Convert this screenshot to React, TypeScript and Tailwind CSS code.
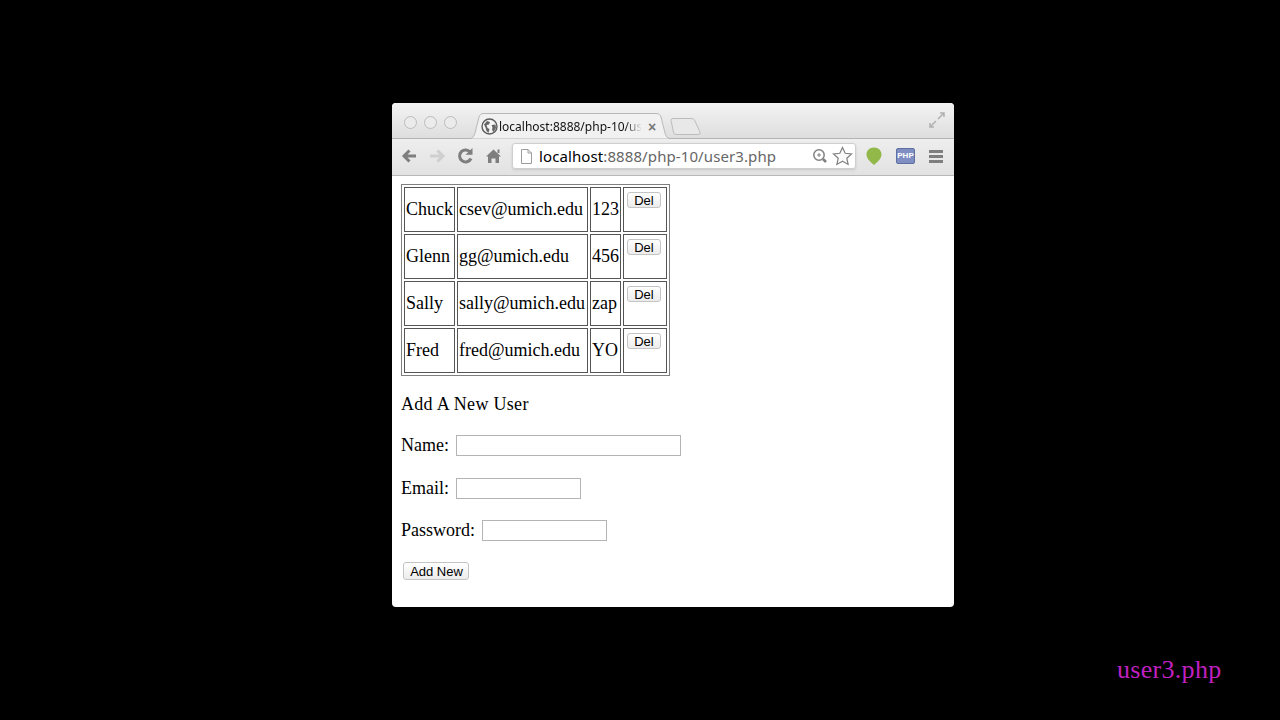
const rows = [
  ["Chuck", "csev@umich.edu", "123"],
  ["Glenn", "gg@umich.edu", "456"],
  ["Sally", "sally@umich.edu", "zap"],
  ["Fred", "fred@umich.edu", "YO"],
];

function GlobeIcon() {
  return (
    <svg width="17" height="17" viewBox="0 0 17 17" className="shrink-0">
      <circle cx="8.5" cy="8.5" r="7.5" fill="#f4f4f4" stroke="#5c5c5c" strokeWidth="1.4" />
      <path d="M3 6.5 L6 3 L9 4 L8 6.5 L5.5 7 L6.5 10 L8.5 11 L7.5 15 L5.5 13 L4.5 9.5 Z" fill="#666" />
      <path d="M10.5 7 L14.5 6.5 L15 10 L12.5 14 L11 12 L11.5 9.5 Z" fill="#666" />
    </svg>
  );
}

function Toolbar() {
  return (
    <div className="flex h-[37px] items-center border-b border-[#b8b8b8] bg-gradient-to-b from-[#eeeeee] to-[#e2e2e2] pb-[2px]">
      <svg width="112" height="20" viewBox="0 0 112 20" className="ml-[9px] shrink-0" fill="none" strokeLinecap="butt" strokeLinejoin="miter">
        <path d="M15 10H3M8.5 4.5L3 10l5.5 5.5" stroke="#7e7e7e" strokeWidth="3" />
        <path d="M29 10H42M36.5 4.5L42 10l-5.500 5.500" stroke="#cfcfcf" strokeWidth="3" />
        <path d="M69.500 6.500A6 6 0 1 0 70 12.500" stroke="#7e7e7e" strokeWidth="3" />
        <path d="M64.500 8.800L71.500 8.800L71.500 2Z" fill="#7e7e7e" />
        <path d="M85 10.500L92.500 3.500L100 10.500L98 10.500V17H94.500V12.500H90.500V17H87V10.500Z" fill="#7e7e7e" />
        <path d="M96.500 3.500H98.500V7H96.500Z" fill="#7e7e7e" />
      </svg>
      <div className="ml-[-1px] flex h-[26px] w-[344px] shrink-0 items-center rounded-[3px] border border-[#cfcfcf] bg-white shadow-sm">
        <svg width="13" height="15" viewBox="0 0 13 15" className="ml-[7px] shrink-0" fill="none" stroke="#9c9c9c">
          <path d="M1.500 .5H8L11.500 4V14.500H1.500Z" />
          <path d="M8 .5V4H11.500" />
        </svg>
        <span className="ml-[6px] whitespace-nowrap font-['Noto_Sans',sans-serif] text-[15px] leading-none tracking-[0.1px] text-[#666666]">
          <span className="text-black">localhost</span>:8888/php-10/user3.php
        </span>
        <svg width="46" height="22" viewBox="0 0 46 22" className="ml-auto mr-[-1px] shrink-0" fill="none">
          <circle cx="9" cy="10" r="5.200" stroke="#808080" strokeWidth="1.500" />
          <path d="M13 14L16 17" stroke="#808080" strokeWidth="2.500" />
          <path d="M7 10H11M9 8V12" stroke="#808080" />
          <path d="M32.500 2.500L35.200 8.300L41.500 9L36.800 13.200L38.100 19.400L32.500 16.300L26.900 19.400L28.200 13.200L23.500 9L29.800 8.300Z" stroke="#808080" strokeWidth="1.200" fill="#fbfbfb" />
        </svg>
      </div>
      <svg width="18" height="20" viewBox="0 0 18 20" className="ml-[9px] shrink-0">
        <path d="M9 1.500C13.500 1.500 16.500 4.500 16.500 8.500C16.500 12.500 13 15.500 9 19C5 15.500 1.500 12.500 1.500 8.500C1.500 4.500 4.500 1.500 9 1.500Z" fill="#93b84a" />
      </svg>
      <div className="ml-[13px] flex h-[16px] w-[19px] shrink-0 items-center justify-center rounded-[2px] border border-[#5f6f9f] bg-[#7f8fc4] font-['Liberation_Sans',sans-serif] text-[8px] font-bold leading-none text-white">
        PHP
      </div>
      <div className="ml-[14px] flex w-[14px] shrink-0 flex-col gap-[2px]">
        <div className="h-[3px] bg-[#7e7e7e]" />
        <div className="h-[3px] bg-[#7e7e7e]" />
        <div className="h-[3px] bg-[#7e7e7e]" />
      </div>
    </div>
  );
}

function TabStrip() {
  return (
    <div className="flex h-[36px] items-end border-b border-[#b4b4b4] bg-gradient-to-b from-[#f3f3f3] to-[#dedede]">
      <div className="mb-[9px] ml-[12px] flex gap-[7px] self-end">
        <div className="h-[13px] w-[13px] rounded-full border border-[#bcbcbc] bg-[#ebebeb]" />
        <div className="h-[13px] w-[13px] rounded-full border border-[#bcbcbc] bg-[#ebebeb]" />
        <div className="h-[13px] w-[13px] rounded-full border border-[#bcbcbc] bg-[#ebebeb]" />
      </div>
      <div className="relative ml-[13px] flex h-[25px] w-[200px] shrink-0 items-center">
        <svg width="200" height="26" viewBox="0 0 200 26" className="absolute left-0 top-0">
          <path d="M0 25.500C3 25.500 4 23 5 20L9 4C10 1.500 11 .5 14 .5H186C189 .5 190 1.500 191 4L195 20C196 23 197 25.500 200 25.500" fill="#f1f1f1" stroke="#b8b8b8" />
        </svg>
        <div className="relative ml-[11px] mt-[2px] flex items-center">
          <GlobeIcon />
          <span className="ml-px w-[143px] whitespace-nowrap font-['Noto_Sans',sans-serif] text-[12px] leading-[16px] text-[#111111] [mask-image:linear-gradient(to_right,black_88%,transparent)]">
            localhost:8888/php-10/us
          </span>
          <span className="ml-[6px] font-['Liberation_Sans',sans-serif] text-[14px] font-bold leading-none text-[#777777]">×</span>
        </div>
      </div>
      <svg width="32" height="17" viewBox="0 0 32 17" className="mb-[3px] ml-0 shrink-0" fill="#e8e8e8" stroke="#bcbcbc">
        <path d="M1 2.500Q1 .5 3 .5H22Q24 .5 25 3L30 14Q31 16.500 28 16.500H6Q4 16.500 3.500 14Z" />
      </svg>
      <svg width="16" height="16" viewBox="0 0 16 16" className="mb-[10px] ml-auto mr-[9px] shrink-0" fill="none" stroke="#b0b0b0" strokeWidth="1.500">
        <path d="M9 7L15 1M11 1H15V5" />
        <path d="M7 9L1 15M1 11V15H5" />
      </svg>
    </div>
  );
}

function Field({ label, width, className }: { label: string; width: string; className: string }) {
  return (
    <p className={`flex items-center ${className}`}>
      <span>{label}</span>
      <input type="text" aria-label={label} className={`ml-[7px] h-[21px] border border-[#b4b4b4] bg-white ${width}`} />
    </p>
  );
}

function DelButton() {
  return (
    <button className="ml-[2px] mt-[3px] block h-[16px] w-[34px] rounded-[3px] border border-[#c4c4c4] bg-gradient-to-b from-white to-[#ececec] font-['Liberation_Sans',sans-serif] text-[13px] leading-none text-black">
      Del
    </button>
  );
}

export default function App() {
  return (
    <div className="flex h-[720px] w-[1280px] overflow-hidden bg-black pl-[392px] pt-[103px]">
      <div className="h-[504px] w-[562px] shrink-0 overflow-hidden rounded-[4px] bg-white">
        <TabStrip />
        <Toolbar />
        <div className="pl-[9px] pt-[8px] font-['Liberation_Serif',serif] text-[18px] leading-[21px] text-black">
          <table className="border-separate border-spacing-[2px] border border-[#808080]">
            <tbody>
              {rows.map((r) => (
                <tr key={r[0]}>
                  <td className="h-[45px] w-[51px] border border-[#555555] px-[1px] pb-[1px]">{r[0]}</td>
                  <td className="h-[45px] w-[131px] border border-[#555555] px-[1px] pb-[1px]">{r[1]}</td>
                  <td className="h-[45px] w-[31px] border border-[#555555] px-[1px] pb-[1px]">{r[2]}</td>
                  <td className="h-[45px] w-[44px] border border-[#555555] p-[1px] align-top">
                    <DelButton />
                  </td>
                </tr>
              ))}
            </tbody>
          </table>
          <p className="mt-[18px] tracking-[0.3px]">Add A New User</p>
          <Field label="Name:" width="w-[225px]" className="mt-[20px]" />
          <Field label="Email:" width="w-[125px]" className="mt-[22px]" />
          <Field label="Password:" width="w-[125px]" className="mt-[21px]" />
          <button className="ml-[2px] mt-[21px] block h-[18px] w-[66px] rounded-[3px] border border-[#c4c4c4] bg-gradient-to-b from-white to-[#ececec] pt-[1px] pl-[1px] font-['Liberation_Sans',sans-serif] text-[13px] leading-none text-black">
            Add New
          </button>
        </div>
      </div>
      <div className="ml-[163px] mt-[551px] font-['Liberation_Serif',serif] text-[26px] leading-[32px] tracking-[0.3px] text-[#c020c0]">
        user3.php
      </div>
    </div>
  );
}
